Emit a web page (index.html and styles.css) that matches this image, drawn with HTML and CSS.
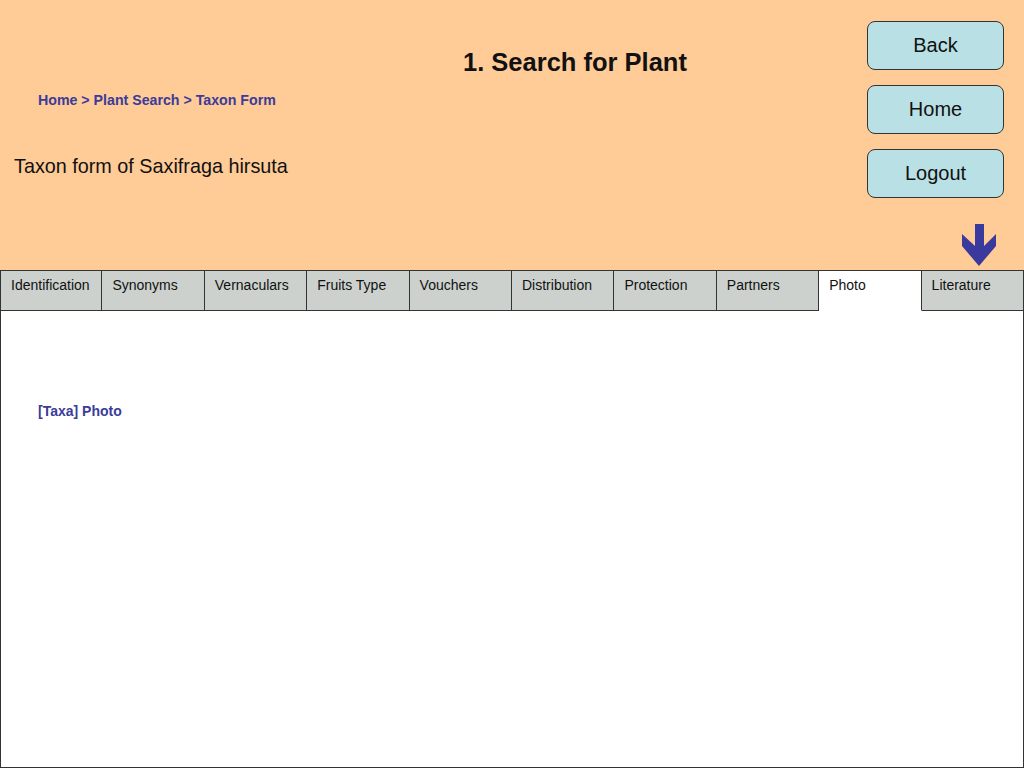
FILE: index.html
```html
<!DOCTYPE html>
<html>
<head>
<meta charset="utf-8">
<link rel="stylesheet" href="styles.css">
</head>
<body>
<header class="header">
  <div class="main">
    <h1 class="title">1. Search for Plant</h1>
    <nav class="crumbs">Home &gt; Plant Search &gt; Taxon Form</nav>
    <p class="taxon">Taxon form of Saxifraga hirsuta</p>
  </div>
  <div class="actions">
    <button class="btn">Back</button>
    <button class="btn">Home</button>
    <button class="btn">Logout</button>
    <svg class="arrow" width="34" height="42" viewBox="0 0 34 42"><polygon points="13,0 22,0 22,22 34,10 34,22 17,42 0,22 0,10 13,22" fill="#3a3a9e"/></svg>
  </div>
</header>
<div class="tabs">
  <div class="tab">Identification</div>
  <div class="tab">Synonyms</div>
  <div class="tab">Vernaculars</div>
  <div class="tab">Fruits Type</div>
  <div class="tab">Vouchers</div>
  <div class="tab">Distribution</div>
  <div class="tab">Protection</div>
  <div class="tab">Partners</div>
  <div class="tab active">Photo</div>
  <div class="tab">Literature</div>
</div>
<section class="content">
  <h2 class="section-title">[Taxa] Photo</h2>
</section>
</body>
</html>
```

FILE: styles.css
```css
html, body {
  margin: 0;
  padding: 0;
  background: #ffffff;
  font-family: "Liberation Sans", Arial, sans-serif;
  color: #111111;
}
.header {
  height: 270px;
  background: #ffcb97;
  display: flex;
  box-sizing: border-box;
}
.main {
  flex: 1;
  padding-left: 14px;
}
.title {
  margin: 47px 0 0 449px;
  font-size: 25.5px;
  line-height: 30px;
  font-weight: bold;
  color: #111;
}
.crumbs {
  margin: 15px 0 0 24px;
  font-size: 14.2px;
  line-height: 16px;
  font-weight: bold;
  color: #3b3b99;
}
.taxon {
  margin: 46px 0 0 0;
  font-size: 19.8px;
  line-height: 24px;
}
.actions {
  width: 137px;
  margin-right: 20px;
  padding-top: 21px;
  display: flex;
  flex-direction: column;
  gap: 15px;
}
.btn {
  height: 49px;
  width: 137px;
  box-sizing: border-box;
  border: 1px solid #333333;
  border-radius: 8px;
  background: #b9e0e5;
  font-family: "Liberation Sans", Arial, sans-serif;
  font-size: 20px;
  color: #111;
  padding: 0;
  margin: 0;
}
.arrow {
  display: block;
  margin: 11px 0 0 95px;
}
.tabs {
  display: grid;
  grid-template-columns: repeat(10, 1fr);
  height: 41px;
  box-sizing: border-box;
  border-top: 1px solid #333333;
}
.tab {
  background: #ccd1ce;
  border-right: 1px solid #333333;
  border-bottom: 1px solid #333333;
  font-size: 14px;
  line-height: 16px;
  padding: 6px 0 0 10px;
  color: #111;
}
.tab:first-child {
  border-left: 1px solid #333333;
}
.tab.active {
  background: #ffffff;
  border-bottom-color: #ffffff;
}
.content {
  height: 457px;
  box-sizing: border-box;
  border-left: 1px solid #333333;
  border-right: 1px solid #333333;
  border-bottom: 1px solid #333333;
  padding: 92px 0 0 37px;
}
.section-title {
  margin: 0;
  font-size: 14px;
  line-height: 16px;
  font-weight: bold;
  color: #3b3b99;
}
```
